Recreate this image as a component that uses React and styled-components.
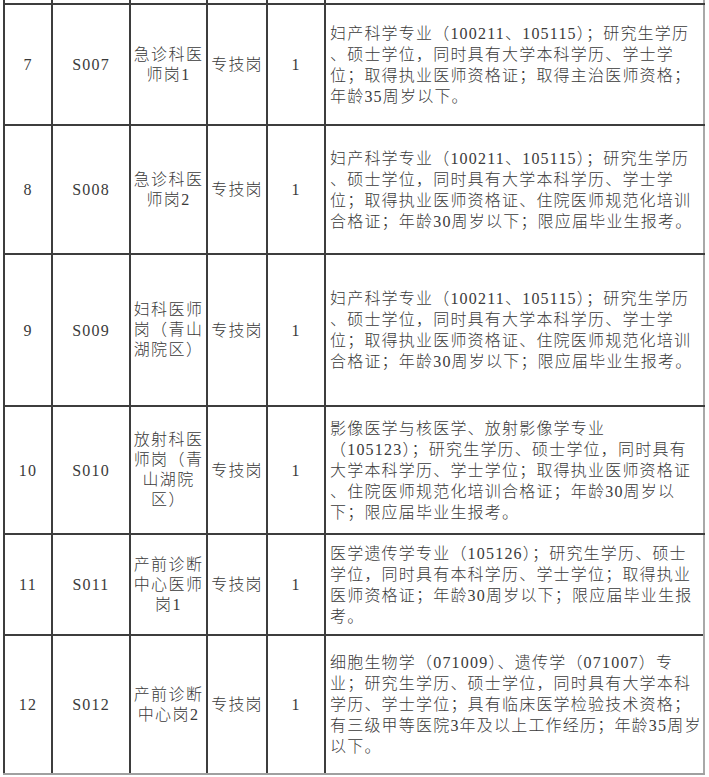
import React from "react";
import styled, { createGlobalStyle } from "styled-components";

const Global = createGlobalStyle`
  html, body { margin: 0; padding: 0; background: #ffffff; }
  body { font-family: "Liberation Serif", "Noto Sans CJK SC", serif; }
`;

const Page = styled.div`
  padding: 0 0 0 3px;
  background: #fff;
  width: 709px;
  height: 777px;
  overflow: hidden;
  box-sizing: border-box;
`;

const Table = styled.table`
  border-collapse: collapse;
  table-layout: fixed;
  width: 700px;
  color: #3a3a3a;
  font-family: "Liberation Serif", "Noto Sans CJK SC", serif;
  font-size: 16px;
  font-weight: 300;
  letter-spacing: 1.2px;
  line-height: 21px;
`;

const Row = styled.tr`
  height: ${(p) => p.$h}px;
`;

const Cell = styled.td`
  border: 2px solid #3d3d3d;
  border-bottom: ${(p) => (p.$dotBottom ? "2px dotted #6a6a6a" : p.$lastRow ? "2px solid #a0a0a0" : "2px solid #3d3d3d")};
  border-top: ${(p) => (p.$noTop ? "none" : undefined)};
  padding: 0;
  text-align: center;
  vertical-align: middle;
  white-space: nowrap;
`;

const DescCell = styled(Cell)`
  text-align: left;
  padding-left: 4px;
  border-left: 2px dotted #7a7a7a;
  border-right: 2px solid #a8a8a8;
`;

const Line = styled.div`
  white-space: nowrap;
`;

const NameLines = styled.div`
  display: flex;
  flex-direction: column;
  align-items: center;
  line-height: 20px;
  letter-spacing: 1.4px;
`;

const rows = [
  {
    no: "7",
    code: "S007",
    name: ["急诊科医", "师岗1"],
    h: 121,
    desc: [
      "妇产科学专业（100211、105115）；研究生学历",
      "、硕士学位，同时具有大学本科学历、学士学",
      "位；取得执业医师资格证；取得主治医师资格；",
      "年龄35周岁以下。",
    ],
  },
  {
    no: "8",
    code: "S008",
    name: ["急诊科医", "师岗2"],
    h: 129,
    desc: [
      "妇产科学专业（100211、105115）；研究生学历",
      "、硕士学位，同时具有大学本科学历、学士学",
      "位；取得执业医师资格证、住院医师规范化培训",
      "合格证；年龄30周岁以下；限应届毕业生报考。",
    ],
  },
  {
    no: "9",
    code: "S009",
    name: ["妇科医师", "岗（青山", "湖院区）"],
    h: 152,
    desc: [
      "妇产科学专业（100211、105115）；研究生学历",
      "、硕士学位，同时具有大学本科学历、学士学",
      "位；取得执业医师资格证、住院医师规范化培训",
      "合格证；年龄30周岁以下；限应届毕业生报考。",
    ],
  },
  {
    no: "10",
    code: "S010",
    name: ["放射科医", "师岗（青", "山湖院", "区）"],
    h: 128,
    desc: [
      "影像医学与核医学、放射影像学专业",
      "（105123）；研究生学历、硕士学位，同时具有",
      "大学本科学历、学士学位；取得执业医师资格证",
      "、住院医师规范化培训合格证；年龄30周岁以",
      "下；限应届毕业生报考。",
    ],
  },
  {
    no: "11",
    code: "S011",
    name: ["产前诊断", "中心医师", "岗1"],
    h: 101,
    dotBottom: true,
    desc: [
      "医学遗传学专业（105126）；研究生学历、硕士",
      "学位，同时具有本科学历、学士学位；取得执业",
      "医师资格证；年龄30周岁以下；限应届毕业生报",
      "考。",
    ],
  },
  {
    no: "12",
    code: "S012",
    name: ["产前诊断", "中心岗2"],
    h: 139,
    lastRow: true,
    desc: [
      "细胞生物学（071009）、遗传学（071007）专",
      "业；研究生学历、硕士学位，同时具有大学本科",
      "学历、学士学位；具有临床医学检验技术资格；",
      "有三级甲等医院3年及以上工作经历；年龄35周岁",
      "以下。",
    ],
  },
];

export default function App() {
  return (
    <Page>
      <Global />
      <Table>
        <colgroup>
          <col style={{ width: 48 }} />
          <col style={{ width: 78 }} />
          <col style={{ width: 77 }} />
          <col style={{ width: 60 }} />
          <col style={{ width: 58 }} />
          <col style={{ width: 379 }} />
        </colgroup>
        <tbody>
          <Row $h={4}>
            <Cell $noTop />
            <Cell $noTop />
            <Cell $noTop />
            <Cell $noTop />
            <Cell $noTop />
            <DescCell $noTop />
          </Row>
          {rows.map((r) => (
            <Row key={r.no} $h={r.h}>
              <Cell $dotBottom={r.dotBottom} $lastRow={r.lastRow}>{r.no}</Cell>
              <Cell $dotBottom={r.dotBottom} $lastRow={r.lastRow}>{r.code}</Cell>
              <Cell $dotBottom={r.dotBottom} $lastRow={r.lastRow}>
                <NameLines>
                  {r.name.map((n, i) => (
                    <Line key={i}>{n}</Line>
                  ))}
                </NameLines>
              </Cell>
              <Cell $dotBottom={r.dotBottom} $lastRow={r.lastRow}>专技岗</Cell>
              <Cell $dotBottom={r.dotBottom} $lastRow={r.lastRow}>1</Cell>
              <DescCell $dotBottom={r.dotBottom} $lastRow={r.lastRow}>
                {r.desc.map((d, i) => (
                  <Line key={i}>{d}</Line>
                ))}
              </DescCell>
            </Row>
          ))}
        </tbody>
      </Table>
    </Page>
  );
}
